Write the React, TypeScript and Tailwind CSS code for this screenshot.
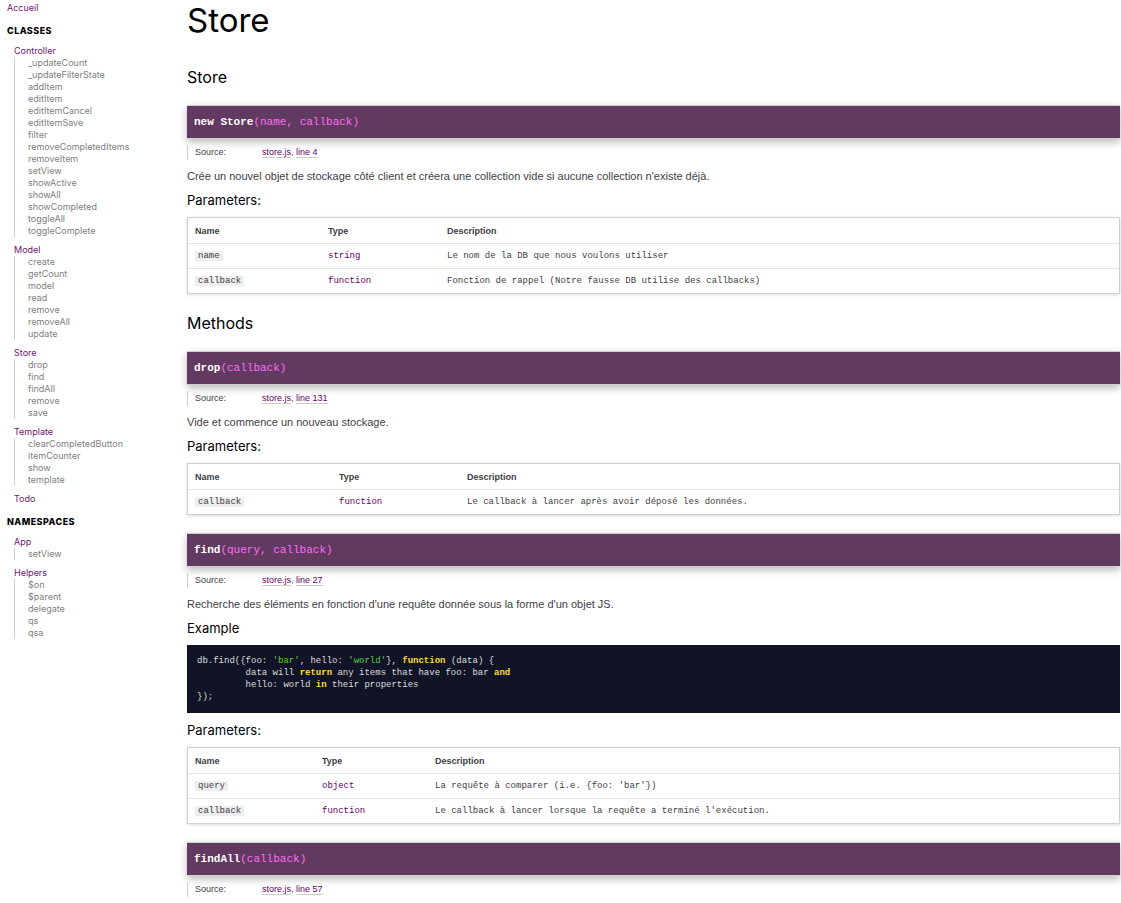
import type { ReactNode } from "react";

type NavGroup = { name: string; members: string[] };
type Param = { name: string; type: string; description: string };

const classes: NavGroup[] = [
  {
    name: "Controller",
    members: [
      "_updateCount", "_updateFilterState", "addItem", "editItem", "editItemCancel", "editItemSave",
      "filter", "removeCompletedItems", "removeItem", "setView", "showActive", "showAll",
      "showCompleted", "toggleAll", "toggleComplete",
    ],
  },
  { name: "Model", members: ["create", "getCount", "model", "read", "remove", "removeAll", "update"] },
  { name: "Store", members: ["drop", "find", "findAll", "remove", "save"] },
  { name: "Template", members: ["clearCompletedButton", "itemCounter", "show", "template"] },
  { name: "Todo", members: [] },
];

const namespaces: NavGroup[] = [
  { name: "App", members: ["setView"] },
  { name: "Helpers", members: ["$on", "$parent", "delegate", "qs", "qsa"] },
];

function NavSection({ title, groups }: { title: string; groups: NavGroup[] }) {
  return (
    <section className="mt-[11px]">
      <h3 className="text-[9px] leading-3 font-extrabold text-black uppercase tracking-wider">{title}</h3>
      <ul className="mt-2 ml-[7px] flex flex-col gap-[7px]">
        {groups.map((group) => (
          <li key={group.name}>
            <a href={"#" + group.name} className="block text-[#6f1370]">{group.name}</a>
            {group.members.length > 0 && (
              <ul className="border-l border-[#d0d0d0] pl-[13px] text-[#808080]">
                {group.members.map((member) => (
                  <li key={member}>
                    <a href={"#" + group.name + "-" + member} className="block">{member}</a>
                  </li>
                ))}
              </ul>
            )}
          </li>
        ))}
      </ul>
    </section>
  );
}

function Signature({ name, args }: { name: string; args: string }) {
  return (
    <h4 className="border-y border-[#d0d0d0] bg-[#623960] px-[7px] text-[11px] leading-8 font-bold text-white shadow-[0_3px_8px_rgba(0,0,0,0.28)] [font-family:'Liberation_Mono',monospace]">
      {name}
      <span className="font-normal text-[#fc6ff5]">{args}</span>
    </h4>
  );
}

function Source({ line }: { line: number }) {
  const link = "border-b border-[#cccccc] text-[#660066]";
  return (
    <dl className="mt-[6px] flex border-l border-[#d0d0d0] pl-[7px] text-[9px] leading-[15px]">
      <dt className="w-[67px]">Source:</dt>
      <dd>
        <a href="#store.js" className={link}>store.js</a>, <a href={"#line" + line} className={link}>line {line}</a>
      </dd>
    </dl>
  );
}

function Text({ children }: { children: ReactNode }) {
  return <p className="mt-2 text-[11px] leading-4">{children}</p>;
}

function Subheading({ children }: { children: ReactNode }) {
  return (
    <h5 className="mt-2 mb-[9px] text-[13px] leading-4 text-black [font-family:Inter,sans-serif]">{children}</h5>
  );
}

function Params({ rows, nameCol, typeCol }: { rows: Param[]; nameCol: string; typeCol: string }) {
  return (
    <>
      <Subheading>Parameters:</Subheading>
      <div className="border border-[#d0d0d0] shadow-[0_1px_3px_rgba(0,0,0,0.15)]">
        <table className="w-full table-fixed border-collapse text-left text-[9px]">
          <thead>
            <tr className="h-[25px] border-b border-[#e6e6e6]">
              <th className={"px-[7px] pt-[2px] pb-0 font-bold " + nameCol}>Name</th>
              <th className={"px-[7px] pt-[2px] pb-0 font-bold " + typeCol}>Type</th>
              <th className="px-[7px] pt-[2px] pb-0 font-bold">Description</th>
            </tr>
          </thead>
          <tbody className="[font-family:'Liberation_Mono',monospace]">
            {rows.map((row) => (
              <tr key={row.name} className="h-[25px] border-b border-[#e6e6e6] last:border-b-0">
                <td className="px-[7px] pt-[2px] pb-0">
                  <code className="bg-[#eeeeee] px-[3px] [font-family:'Liberation_Mono',monospace]">{row.name}</code>
                </td>
                <td className="px-[7px] pt-[2px] pb-0 text-[#660066]">{row.type}</td>
                <td className="px-[7px] pt-[2px] pb-0">{row.description}</td>
              </tr>
            ))}
          </tbody>
        </table>
      </div>
    </>
  );
}

function Keyword({ children }: { children: ReactNode }) {
  return <span className="font-bold text-[#ffdd33]">{children}</span>;
}

function Str({ children }: { children: ReactNode }) {
  return <span className="text-[#55cc44]">{children}</span>;
}

export default function App() {
  return (
    <div className="flex bg-white text-[#3f4045] [font-family:'Liberation_Sans',sans-serif]">
      <nav className="w-[187px] shrink-0 pt-[2px] pl-[7px] text-[9px] leading-3 [font-family:Inter,sans-serif]">
        <a href="#accueil" className="block text-[#6f1370]">Accueil</a>
        <NavSection title="Classes" groups={classes} />
        <NavSection title="Namespaces" groups={namespaces} />
      </nav>

      <main className="min-w-0 flex-1 pr-px pb-[6px]">
        <h1 className="text-[33px] leading-10 text-black [font-family:Inter,sans-serif]">Store</h1>

        <h2 className="mt-[25px] mb-4 text-base leading-6 text-black [font-family:Inter,sans-serif]">Store</h2>
        <Signature name="new Store" args="(name, callback)" />
        <Source line={4} />
        <Text>
          Crée un nouvel objet de stockage côté client et créera une collection vide si aucune collection n'existe déjà.
        </Text>
        <Params
          nameCol="w-[133px]"
          typeCol="w-[119px]"
          rows={[
            { name: "name", type: "string", description: "Le nom de la DB que nous voulons utiliser" },
            { name: "callback", type: "function", description: "Fonction de rappel (Notre fausse DB utilise des callbacks)" },
          ]}
        />

        <h2 className="mt-[17px] mb-4 text-base leading-6 text-black [font-family:Inter,sans-serif]">Methods</h2>
        <section>
          <Signature name="drop" args="(callback)" />
          <Source line={131} />
          <Text>Vide et commence un nouveau stockage.</Text>
          <Params
            nameCol="w-[144px]"
            typeCol="w-[128px]"
            rows={[
              { name: "callback", type: "function", description: "Le callback à lancer après avoir déposé les données." },
            ]}
          />
        </section>

        <section className="mt-[18px]">
          <Signature name="find" args="(query, callback)" />
          <Source line={27} />
          <Text>Recherche des éléments en fonction d'une requête donnée sous la forme d'un objet JS.</Text>
          <Subheading>Example</Subheading>
          <pre className="mb-[9px] overflow-x-auto bg-[#111426] p-[10px] text-[9px] leading-3 text-[#dddddd] [font-family:'Liberation_Mono',monospace]">
            <code className="block [font-family:'Liberation_Mono',monospace]">
              <span className="block">
                {"db.find({foo: "}<Str>'bar'</Str>{", hello: "}<Str>'world'</Str>{"}, "}<Keyword>function</Keyword>{" (data) {"}
              </span>
              <span className="block">
                {"         data will "}<Keyword>return</Keyword>{" any items that have foo: bar "}<Keyword>and</Keyword>
              </span>
              <span className="block">
                {"         hello: world "}<Keyword>in</Keyword>{" their properties"}
              </span>
              <span className="block">{"});"}</span>
            </code>
          </pre>
          <Params
            nameCol="w-[127px]"
            typeCol="w-[113px]"
            rows={[
              { name: "query", type: "object", description: "La requête à comparer (i.e. {foo: 'bar'})" },
              { name: "callback", type: "function", description: "Le callback à lancer lorsque la requête a terminé l'exécution." },
            ]}
          />
        </section>

        <section className="mt-[18px]">
          <Signature name="findAll" args="(callback)" />
          <Source line={57} />
        </section>
      </main>
    </div>
  );
}
